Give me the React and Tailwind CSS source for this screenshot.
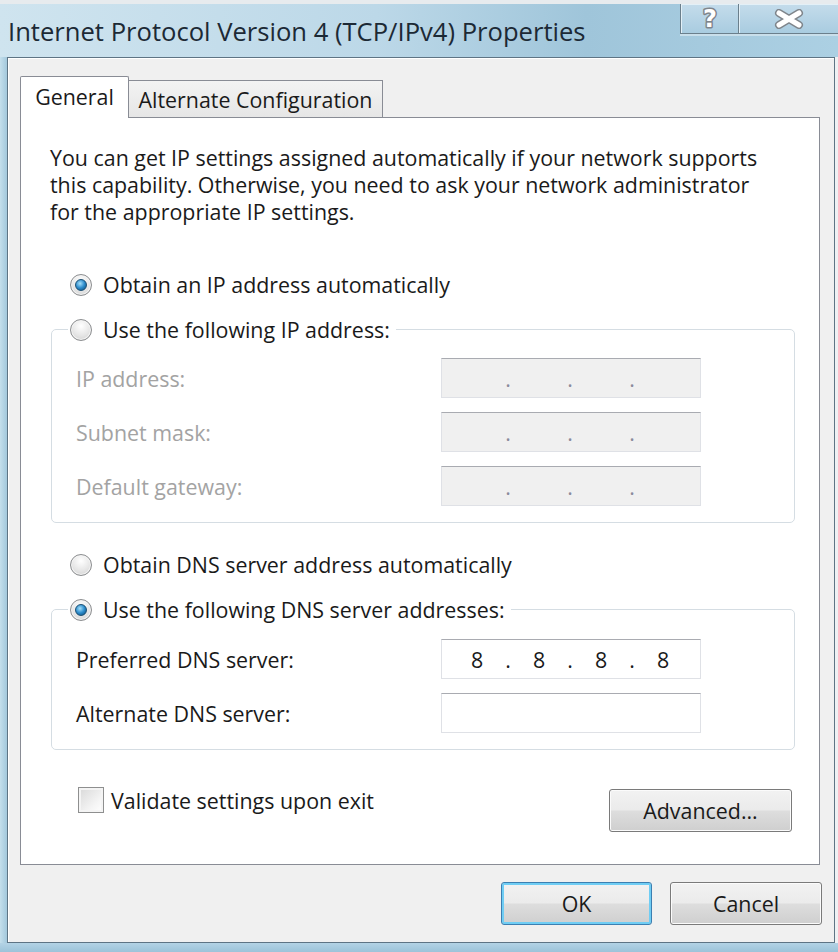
import { Fragment } from 'react';

const font = "font-['Open_Sans','Noto_Sans',sans-serif]";

function Radio({ checked }) {
  return (
    <span className="flex h-[22px] w-[22px] shrink-0 items-center justify-center rounded-full border border-[#8c8e90] bg-[radial-gradient(circle_at_50%_30%,#ffffff,#e6e6e6_55%,#cdcdcd)] shadow-[inset_0_0_0_1px_#f4f4f4]">
      {checked && (
        <span className="h-[12px] w-[12px] rounded-full border border-[#1b4f73] bg-[radial-gradient(circle_at_40%_35%,#a6e0fa,#2c8ccc_50%,#0d4a75)]" />
      )}
    </span>
  );
}

function IpBox({ value, dots, disabled }) {
  const parts = value ? value.split('.') : ['', '', '', ''];
  return (
    <div
      className={`flex h-[40px] w-[260px] items-center border border-[#dfe1e6] border-t-[#a9abb1] pl-[10px] ${
        disabled ? 'bg-[#f0f0f0] text-[#8a8a9c]' : 'bg-white text-[#1a1a1a]'
      }`}
    >
      {dots &&
        parts.map((p, i) => (
          <Fragment key={i}>
            <span className="w-[50px] text-center">{p}</span>
            {i < 3 && <span className="w-[12px] text-center">.</span>}
          </Fragment>
        ))}
    </div>
  );
}

function Field({ label, value, dots, disabled }) {
  return (
    <div className="flex h-[40px] items-center">
      <span className={`ml-[8px] w-[365px] ${disabled ? 'text-[#a3a3a3]' : 'text-[#1a1a1a]'}`}>{label}</span>
      <IpBox value={value} dots={dots} disabled={disabled} />
    </div>
  );
}

function RadioRow({ checked, children }) {
  return (
    <div className="ml-[49px] flex h-[27px] items-center">
      <Radio checked={checked} />
      <span className="ml-[11px]">{children}</span>
    </div>
  );
}

function Group({ checked, title, children }) {
  return (
    <fieldset className="ml-[30px] w-[744px] rounded-[5px] border border-[#d5dde3] pb-[16px] pl-[16px]">
      <legend className="pr-[6px]">
        <div className="flex h-[27px] items-center pl-[2px]">
          <Radio checked={checked} />
          <span className="ml-[11px]">{title}</span>
        </div>
      </legend>
      {children}
    </fieldset>
  );
}

function WinButton({ children, primary, className }) {
  return (
    <button
      className={`flex h-[43px] items-center justify-center rounded-[3px] border bg-[linear-gradient(to_bottom,#f2f2f2_0%,#ebebeb_48%,#dddddd_52%,#cfcfcf_100%)] text-[#1a1a1a] ${
        primary
          ? 'border-[#3c7fb1] shadow-[inset_0_0_0_2px_#6fcdf4]'
          : 'border-[#7a7a7a] shadow-[inset_0_0_0_1px_#fbfbfb]'
      } ${className}`}
    >
      {children}
    </button>
  );
}

export default function App() {
  return (
    <div className={`flex h-[952px] w-[838px] flex-col bg-[#a9cce0] text-[21.4px] leading-[27px] text-[#1a1a1a] ${font}`}>
      {/* title bar */}
      <div className="h-[4px] bg-[#e7ebee]" />
      <div className="flex h-[53px] items-start bg-[linear-gradient(to_right,#cfe4ef_0%,#bcd8e8_45%,#9fc5da_70%,#acd0e3_100%)]">
        <span className="mt-[12px] pl-[8px] text-[25.6px] leading-[32px] text-[#1c2935]">
          Internet Protocol Version 4 (TCP/IPv4) Properties
        </span>
        <div className="ml-auto flex h-[30px] border-b border-l border-[#6b7f8c] shadow-[0_2px_0_#c9dfeb]">
          <div className="flex w-[58px] items-center justify-center border-r border-[#6b7f8c] bg-[linear-gradient(to_bottom,#c4dceb,#a9cce0)] shadow-[inset_1px_1px_0_#e3f0f7]">
            <svg width="24" height="28" viewBox="0 0 24 28">
              <text
                x="12"
                y="22"
                textAnchor="middle"
                fontFamily="DejaVu Sans, sans-serif"
                fontWeight="bold"
                fontSize="24"
                fill="#ffffff"
                stroke="#7f858b"
                strokeWidth="3"
                paintOrder="stroke"
                strokeLinejoin="round"
              >
                ?
              </text>
            </svg>
          </div>
          <div className="flex w-[99px] items-center justify-center bg-[linear-gradient(to_bottom,#c4dceb,#a9cce0)] shadow-[inset_1px_1px_0_#e3f0f7]">
            <svg width="30" height="20" viewBox="0 0 30 20">
              <path d="M5 4 L25 16 M25 4 L5 16" stroke="#7f858b" strokeWidth="8" strokeLinecap="round" />
              <path d="M5 4 L25 16 M25 4 L5 16" stroke="#ffffff" strokeWidth="5" strokeLinecap="round" />
            </svg>
          </div>
        </div>
      </div>

      {/* body */}
      <div className="flex h-[886px]">
        <div className="w-[7px] bg-[linear-gradient(to_right,#c4dfec,#a3c8dc)]" />
        <div className="flex w-[828px] flex-col border border-[#5e7484] bg-[#f0f0f0] px-[12px] pt-[18px] shadow-[inset_1px_1px_0_#ffffff]">
          {/* tabs */}
          <div className="flex h-[41px] items-end">
            <div className="relative z-10 -mb-px flex h-[42px] w-[109px] items-center justify-center rounded-t-[2px] border border-b-0 border-[#898c95] bg-white pb-[3px]">
              General
            </div>
            <div className="flex h-[37px] w-[254px] items-center justify-center border-t border-r border-[#898c95] bg-[linear-gradient(to_bottom,#f3f3f3,#e6e6e6)]">
              Alternate Configuration
            </div>
          </div>

          {/* panel */}
          <div className="flex h-[748px] w-[800px] flex-col border border-[#898c95] bg-white pt-[26px]">
            <p className="ml-[29px]">
              You can get IP settings assigned automatically if your network supports
              <br />
              this capability. Otherwise, you need to ask your network administrator
              <br />
              for the appropriate IP settings.
            </p>

            <div className="mt-[46px]">
              <RadioRow checked>Obtain an IP address automatically</RadioRow>
            </div>

            <div className="mt-[18px]">
              <Group title="Use the following IP address:">
                <div className="mt-[15px] flex flex-col gap-[14px]">
                  <Field label="IP address:" dots disabled />
                  <Field label="Subnet mask:" dots disabled />
                  <Field label="Default gateway:" dots disabled />
                </div>
              </Group>
            </div>

            <div className="mt-[28px]">
              <RadioRow>Obtain DNS server address automatically</RadioRow>
            </div>

            <div className="mt-[18px]">
              <Group checked title="Use the following DNS server addresses:">
                <div className="mt-[16px] flex flex-col gap-[14px]">
                  <Field label="Preferred DNS server:" value="8.8.8.8" dots />
                  <Field label="Alternate DNS server:" />
                </div>
              </Group>
            </div>

            <div className="mt-[37px] ml-[57px] flex items-start">
              <div className="flex h-[26px] items-center">
                <span className="h-[26px] w-[26px] border border-[#8e8f8f] bg-[linear-gradient(135deg,#d8d8d8,#f6f6f6_70%,#ffffff)] shadow-[inset_0_0_0_2px_#f4f4f4]" />
                <span className="ml-[7px]">Validate settings upon exit</span>
              </div>
              <WinButton className="mt-[2px] mr-[27px] ml-auto w-[183px]">Advanced...</WinButton>
            </div>
          </div>

          {/* dialog buttons */}
          <div className="mt-[17px] ml-[481px] flex gap-[18px]">
            <WinButton primary className="w-[151px]">
              OK
            </WinButton>
            <WinButton className="w-[152px]">Cancel</WinButton>
          </div>
        </div>
        <div className="w-[3px] bg-[#eef1f3]" />
      </div>
      <div className="h-[9px] bg-[linear-gradient(to_bottom,#b3d3e5,#9cc3d9)]" />
    </div>
  );
}
